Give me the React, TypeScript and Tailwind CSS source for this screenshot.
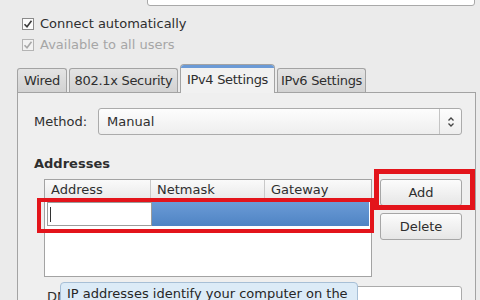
import React from "react";

function Check({ disabled }: { disabled?: boolean }) {
  return (
    <div
      className={`w-[12px] h-[12px] border flex items-center justify-center ${
        disabled ? "border-[#b4b4b4] bg-[#f2f2f2]" : "border-[#8a8a8a] bg-[#fbfbfb]"
      }`}
    >
      <svg width="10" height="10" viewBox="0 0 10 10">
        <path
          d="M1.5 5.2 L4 7.8 L8.5 1.8"
          fill="none"
          stroke={disabled ? "#a8a8a8" : "#3a3a3a"}
          strokeWidth="1.6"
        />
      </svg>
    </div>
  );
}

const inactiveTab =
  "h-[24px] flex items-center justify-center border border-b-0 border-[#a3a3a3] rounded-t-[3px] bg-gradient-to-b from-[#e4e4e4] to-[#d2d2d2] tracking-[-0.3px]";

export default function App() {
  return (
    <div
      className="relative w-[480px] h-[300px] overflow-hidden bg-[#ebebeb] text-[13px] text-[#2e2e2e]"
      style={{ fontFamily: '"DejaVu Sans", sans-serif' }}
    >
      {/* top row (cut off) */}
      <div className="-mt-[22px] h-[28px] flex items-end">
        <div className="pl-[20px] leading-[16px] text-[#3a3a3a] mb-[9px]">Connection name:</div>
        <div className="ml-auto mr-[5px] w-[328px] h-[28px] border border-[#a9a9a9] rounded-[3px] bg-white" />
      </div>

      {/* checkboxes */}
      <div className="mt-[8px] h-[20px] flex items-center pl-[22px] gap-[6px]">
        <Check />
        <span>Connect automatically</span>
      </div>
      <div className="mt-[1px] h-[20px] flex items-center pl-[22px] gap-[6px]">
        <Check disabled />
        <span className="text-[#a6a6a6]">Available to all users</span>
      </div>

      {/* tabs */}
      <div className="mt-[9px] h-[28px] flex items-end pl-[17px] gap-[2px]">
        <div className={`${inactiveTab} w-[50px]`}>Wired</div>
        <div className={`${inactiveTab} w-[109px]`}>802.1x Security</div>
        <div className="relative h-[29px] -mb-[1px] w-[95px] flex items-center justify-center border border-b-0 border-[#a3a3a3] rounded-t-[4px] bg-[#f1f1f1] z-10 tracking-[-0.3px]">
          <div className="absolute left-0 right-0 top-0 h-[3px] bg-[#6b9ad6] rounded-t-[3px]" />
          <span className="mt-[2px]">IPv4 Settings</span>
        </div>
        <div className={`${inactiveTab} w-[89px]`}>IPv6 Settings</div>
      </div>

      {/* panel */}
      <div className="ml-[17px] mr-[4px] h-[220px] border border-[#a3a3a3] bg-[#efefef] pl-[16px] pr-[13px] pt-[15px]">
        <div className="flex items-center h-[27px]">
          <span className="w-[64px]">Method:</span>
          <div className="flex-1 h-[27px] flex items-center border border-[#ababab] rounded-[3px] bg-gradient-to-b from-[#fdfdfd] to-[#eeeeee]">
            <span className="pl-[8px] flex-1">Manual</span>
            <div className="w-[22px] h-full border-l border-[#c4c4c4] flex items-center justify-center">
              <svg width="8" height="12" viewBox="0 0 8 12">
                <path d="M1.5 4.5 L4 2 L6.5 4.5 M1.5 7.5 L4 10 L6.5 7.5" fill="none" stroke="#444" strokeWidth="1.3" />
              </svg>
            </div>
          </div>
        </div>

        <div className="mt-[21px] h-[16px] leading-[16px] font-bold">Addresses</div>

        <div className="mt-[7px] flex gap-[8px]">
          <div className="ml-[10px] w-[328px] h-[98px] border border-[#a3a3a3] bg-white flex flex-col">
            <div className="h-[21px] flex bg-gradient-to-b from-[#fafafa] to-[#e9e9e9] border-b border-[#d0d0d0]">
              <div className="w-[106px] pl-[6px] flex items-center border-r border-[#c9c9c9]">Address</div>
              <div className="w-[114px] pl-[6px] flex items-center border-r border-[#c9c9c9]">Netmask</div>
              <div className="flex-1 pl-[6px] flex items-center">Gateway</div>
            </div>
            <div className="mt-[1px] h-[24px] flex">
              <div className="ml-[2px] w-[105px] h-[24px] border border-[#9c9c9c] bg-white flex items-center pl-[2px]">
                <div className="w-[1px] h-[15px] bg-[#333]" />
              </div>
              <div className="flex-1 mr-[2px] h-[24px] bg-gradient-to-b from-[#6b9bd6] to-[#4f84c4]" />
            </div>
          </div>
          <div className="w-[82px] flex flex-col gap-[7px]">
            <div className="h-[27px] flex items-center justify-center border border-[#a6a6a6] rounded-[3px] bg-gradient-to-b from-[#fcfcfc] to-[#e6e6e6]">
              Add
            </div>
            <div className="h-[27px] flex items-center justify-center border border-[#a6a6a6] rounded-[3px] bg-gradient-to-b from-[#fcfcfc] to-[#e6e6e6]">
              Delete
            </div>
          </div>
        </div>

        <div className="mt-[9px] flex items-start">
          <span className="ml-[13px] mt-[3px] leading-[16px]">DNS servers:</span>
          <div className="ml-auto w-[322px] h-[27px] border border-[#ababab] rounded-[3px] bg-white" />
        </div>
      </div>

      {/* annotation boxes */}
      <div className="absolute left-[37px] top-[198px] w-[337px] h-[35px] border-[4px] border-[#e3141b]" />
      <div className="absolute left-[374px] top-[169px] w-[101px] h-[41px] border-[5px] border-[#e3141b]" />

      {/* tooltip */}
      <div className="absolute left-[60px] top-[282px] w-[298px] h-[40px] border border-[#a7bfd6] rounded-[4px] bg-[#dcebf7] pl-[6px] pt-[3px] leading-[16px] text-[#262626]">
        IP addresses identify your computer on the
      </div>
    </div>
  );
}
